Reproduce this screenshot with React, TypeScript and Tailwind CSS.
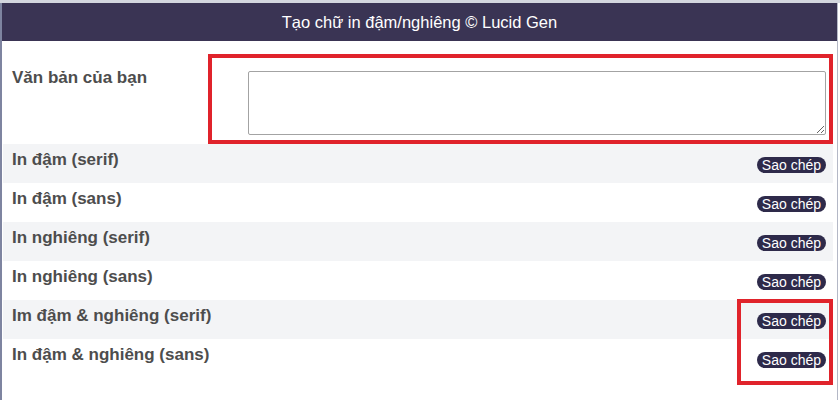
import React from 'react';

const rows = [
  'In đậm (serif)',
  'In đậm (sans)',
  'In nghiêng (serif)',
  'In nghiêng (sans)',
  'Im đậm & nghiêng (serif)',
  'In đậm & nghiêng (sans)',
];

export default function App() {
  return (
    <div className="relative w-[840px] h-[400px] overflow-hidden bg-white font-['Liberation_Sans',Arial,sans-serif]">
      <div className="h-[3px] bg-[#d3d6de]" />
      <div className="w-[838px] h-[397px] border-l-2 border-r border-l-[#7e84a0] border-r-[#b4b8c6]">
        {/* Header */}
        <div className="h-[38px] bg-[#3a3454] flex items-center justify-center text-white text-[16.5px]">
          Tạo chữ in đậm/nghiêng © Lucid Gen
        </div>

        {/* Input row */}
        <div className="flex h-[103px]">
          <div className="w-[246px] pl-[10px] pt-[27px] text-[17px] font-bold text-[#4d4d4d] leading-[19px]">
            Văn bản của bạn
          </div>
          <textarea className="mt-[30px] w-[578px] h-[64px] border border-[#a3a3a3] rounded-[2px] bg-white" />
        </div>

        {/* Output rows */}
        <div className="ml-px mr-[4px]">
          {rows.map((label, i) => (
            <div
              key={label}
              className={`flex items-start justify-between h-[39px] pl-[9px] pr-[7px] ${i % 2 === 0 ? 'bg-[#f3f4f6]' : 'bg-white'}`}
            >
              <span className="pt-[6px] text-[17px] font-bold text-[#4d4d4d] leading-[19px]">{label}</span>
              <button className="mt-[13px] h-[16px] px-[5px] rounded-full bg-[#2e2a4a] text-white text-[14px] leading-[16px]">
                Sao chép
              </button>
            </div>
          ))}
        </div>
      </div>

      {/* Annotation boxes */}
      <div className="absolute left-[208px] top-[54px] w-[625px] h-[90px] border-4 border-[#e0232b]" />
      <div className="absolute left-[737px] top-[299px] w-[96px] h-[86px] border-4 border-[#e0232b]" />
    </div>
  );
}
